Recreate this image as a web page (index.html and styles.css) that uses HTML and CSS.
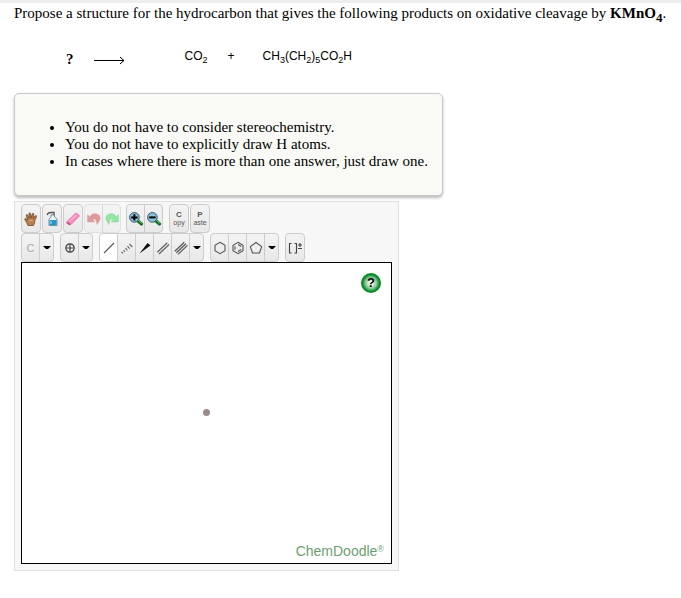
FILE: index.html
```html
<!DOCTYPE html>
<html lang="en">
<head>
    <meta charset="UTF-8">
    <meta name="viewport" content="width=device-width, initial-scale=1.0">
    <title>Oxidative cleavage</title>
    <link rel="stylesheet" href="styles.css">
</head>
<body>
    <main class="problem">
        <p class="question">Propose a structure for the hydrocarbon that gives the following products on oxidative cleavage by <b>KMnO<sub>4</sub></b>.</p>
        <div class="reaction">
            <b class="unknown">?</b>
            <svg class="arrow" width="31" height="9" viewBox="0 0 31 9">
                <path d="M0 4.5H30M26 1L30 4.5L26 8" fill="none" stroke="#000"/>
            </svg>
            <span class="product">CO<sub>2</sub></span>
            <span class="plus">+</span>
            <span class="product">CH<sub>3</sub>(CH<sub>2</sub>)<sub>5</sub>CO<sub>2</sub>H</span>
        </div>
        <div class="notes">
            <ul>
                <li>You do not have to consider stereochemistry.</li>
                <li>You do not have to explicitly draw H atoms.</li>
                <li>In cases where there is more than one answer, just draw one.</li>
            </ul>
        </div>
        <div class="sketcher">
            <div class="toolbar toolbar-edit">
                <button type="button" class="tool" aria-label="Move">
                    <svg width="14" height="16" viewBox="0 0 14 16">
                        <path d="M4 14.5L2.6 11.5L.8 8.4Q.6 7.3 1.7 7.5L3.5 9.2L2.3 4.4Q2.4 3.2 3.5 3.7L5 7.4L5 2.5Q5.7 1.3 6.5 2.4L7.1 7.1L8.4 2.7Q9.4 1.8 9.8 3L9.2 7.6L11.4 4.7Q12.7 4.3 12.5 5.6L10.9 9.5L10.4 12.5L9.4 14.5Z" fill="#b9814f" stroke="#704322" stroke-width=".8"/>
                        <path d="M5 10Q7 8.5 9 10" fill="none" stroke="#dfac7c"/>
                    </svg>
                </button>
                <button type="button" class="tool" aria-label="Clear">
                    <svg width="14" height="16" viewBox="0 0 14 16">
                        <path d="M2 4Q3 1.5 6 1.5H9V4.5H6" fill="none" stroke="#555" stroke-width="1.3"/>
                        <path d="M6 4H9.5V6L12 8V14.5H4V8L6 6Z" fill="#eef6fb" stroke="#56788c" stroke-width=".8"/>
                        <path d="M4.4 9H11.6V14.2H4.4Z" fill="#2b94cb"/>
                        <path d="M6 10V13" stroke="#a8e2f7"/>
                    </svg>
                </button>
                <button type="button" class="tool" aria-label="Erase">
                    <svg width="16" height="16" viewBox="0 0 16 16">
                        <path d="M1.5 11L10.3 2.5Q12.5 1.8 14.5 5L6 13.5Q2.5 14.5 1.5 11Z" fill="#fb91c1" stroke="#d56c9a" stroke-width=".8"/>
                        <path d="M1.5 11Q4 10.5 6 13.5Q2.5 14.5 1.5 11Z" fill="#c14f7b"/>
                        <path d="M4.5 10L11.5 3.8" stroke="#ffc5df"/>
                    </svg>
                </button>
                <span class="group">
                    <button type="button" class="tool" aria-label="Undo" disabled>
                        <svg width="16" height="16" viewBox="0 0 16 16">
                            <path d="M1.5 3.5V11H9L6.8 8.7Q10 6.2 11 13.5Q17.5 5.5 11 3Q6.3 1.5 3.8 5.8Z" fill="#c63d3d" stroke="#c26868" stroke-width=".6"/>
                        </svg>
                    </button>
                    <button type="button" class="tool" aria-label="Redo" disabled>
                        <svg width="16" height="16" viewBox="0 0 16 16">
                            <path d="M14.5 3.5V11H7L9.2 8.7Q6 6.2 5 13.5Q-1.5 5.5 5 3Q9.7 1.5 12.2 5.8Z" fill="#2bd850" stroke="#4cad60" stroke-width=".6"/>
                        </svg>
                    </button>
                </span>
                <span class="group">
                    <button type="button" class="tool" aria-label="Zoom in">
                        <svg width="16" height="16" viewBox="0 0 16 16">
                            <path d="M9.5 9.5L13.5 13" stroke="#176b2b" stroke-width="3.2" stroke-linecap="round"/>
                            <path d="M10 9L13.5 12" stroke="#5fdc55" stroke-linecap="round"/>
                            <circle cx="6.4" cy="6.4" r="4.8" fill="#8bc2df" stroke="#38525f"/>
                            <path d="M6.4 3.2V9.6M3.2 6.4H9.6" stroke="#000" stroke-width="2"/>
                        </svg>
                    </button>
                    <button type="button" class="tool" aria-label="Zoom out">
                        <svg width="16" height="16" viewBox="0 0 16 16">
                            <path d="M9.5 9.5L13.5 13" stroke="#176b2b" stroke-width="3.2" stroke-linecap="round"/>
                            <path d="M10 9L13.5 12" stroke="#5fdc55" stroke-linecap="round"/>
                            <circle cx="6.4" cy="6.4" r="4.8" fill="#8bc2df" stroke="#38525f"/>
                            <path d="M3.2 6.4H9.6" stroke="#000" stroke-width="2"/>
                        </svg>
                    </button>
                </span>
                <button type="button" class="tool tool-text"><b>C</b><small>opy</small></button>
                <button type="button" class="tool tool-text"><b>P</b><small>aste</small></button>
            </div>
            <div class="toolbar">
                <span class="group">
                    <button type="button" class="tool label" disabled>C</button>
                    <button type="button" class="tool drop" aria-label="More labels"><svg width="8" height="4" viewBox="0 0 8 4"><path d="M0 0H8L5 3H3Z"/></svg></button>
                </span>
                <span class="group">
                    <button type="button" class="tool" aria-label="Increase charge">
                        <svg width="16" height="16" viewBox="0 0 16 16">
                            <path d="M8 4V12M4 8H12M12.2 8A4.2 4.2 0 1 1 3.8 8A4.2 4.2 0 1 1 12.2 8" fill="none" stroke="#444" stroke-width="1.2"/>
                        </svg>
                    </button>
                    <button type="button" class="tool drop" aria-label="More attributes"><svg width="8" height="4" viewBox="0 0 8 4"><path d="M0 0H8L5 3H3Z"/></svg></button>
                </span>
                <span class="group">
                    <button type="button" class="tool active" aria-label="Single bond">
                        <svg width="16" height="16" viewBox="0 0 16 16"><path d="M3 13L13 3" stroke="#555" stroke-width="1.1"/></svg>
                    </button>
                    <button type="button" class="tool" aria-label="Recessed bond">
                        <svg width="16" height="16" viewBox="0 0 16 16"><path d="M2.5 12L4 13.2M4.5 10.2L6 12M6.5 8.2L8.3 10.4M8.5 6.2L10.7 8.6M10.5 4L13.3 7" stroke="#666" stroke-width="1.1"/></svg>
                    </button>
                    <button type="button" class="tool" aria-label="Protruding bond">
                        <svg width="16" height="16" viewBox="0 0 16 16"><path d="M2.5 13.5L10.5 3L13.5 5.5Z" fill="#111"/></svg>
                    </button>
                    <button type="button" class="tool" aria-label="Double bond">
                        <svg width="16" height="16" viewBox="0 0 16 16"><path d="M2.3 12.3L12.3 2.8M4 14L14 4.5" stroke="#666" stroke-width="1.3"/></svg>
                    </button>
                    <button type="button" class="tool" aria-label="Triple bond">
                        <svg width="16" height="16" viewBox="0 0 16 16"><path d="M1.8 11.2L11.3 2.2M3.4 12.8L12.9 3.8M5 14.4L14.5 5.4" stroke="#555" stroke-width="1.2"/></svg>
                    </button>
                    <button type="button" class="tool drop" aria-label="More bonds"><svg width="8" height="4" viewBox="0 0 8 4"><path d="M0 0H8L5 3H3Z"/></svg></button>
                </span>
                <span class="group">
                    <button type="button" class="tool" aria-label="Cyclohexane ring">
                        <svg width="16" height="16" viewBox="0 0 16 16"><path d="M8 2.3L13 5.2V10.8L8 13.7L3 10.8V5.2Z" fill="none" stroke="#555" stroke-width="1.1"/></svg>
                    </button>
                    <button type="button" class="tool" aria-label="Benzene ring">
                        <svg width="16" height="16" viewBox="0 0 16 16"><path d="M8 2.3L13 5.2V10.8L8 13.7L3 10.8V5.2ZM5 6.2V9.8M8 4.5L11.3 6.4M8 11.5L11.3 9.6" fill="none" stroke="#555" stroke-width="1.1"/></svg>
                    </button>
                    <button type="button" class="tool" aria-label="Cyclopentane ring">
                        <svg width="16" height="16" viewBox="0 0 16 16"><path d="M8 2.5L13.7 6.6L11.5 13H4.5L2.3 6.6Z" fill="none" stroke="#555" stroke-width="1.1"/></svg>
                    </button>
                    <button type="button" class="tool drop" aria-label="More rings"><svg width="8" height="4" viewBox="0 0 8 4"><path d="M0 0H8L5 3H3Z"/></svg></button>
                </span>
                <button type="button" class="tool" aria-label="Brackets and charge">
                    <svg width="16" height="16" viewBox="0 0 16 16"><path d="M4.5 3.5H2.5V13H4.5M7.5 3.5H9.5V13H7.5M11 5H15M13 3V7M11 8.5H15" fill="none" stroke="#444" stroke-width="1.1"/></svg>
                </button>
            </div>
            <div class="canvas">
                <svg width="369" height="300" viewBox="0 0 369 300">
                    <circle cx="184.5" cy="149.5" r="3.5" fill="#9b8c8c"/>
                    <text class="brand" x="362" y="293" text-anchor="end">ChemDoodle<tspan class="mark" dy="-4">®</tspan></text>
                </svg>
                <button type="button" class="help">?</button>
            </div>
        </div>
    </main>
</body>
</html>
```
FILE: styles.css
```css
body {
    margin: 0;
    border-top: 3px solid #eee;
    background-color: #fff;
    color: #000;
    font: 15px/17px "Liberation Serif", "Times New Roman", serif;
}
.problem {
    padding: 2px 14px 24px;
}
.question {
    margin: 0;
    min-height: 19px;
}
sub {
    line-height: 0;
}
.question sub {
    font-size: 13px;
}
.reaction {
    display: flex;
    align-items: center;
    height: 32px;
    margin: 16px 0 21px;
    padding-left: 52px;
    font: 12px/16px "Liberation Sans", Arial, sans-serif;
}
.unknown {
    padding-top: 6px;
    font: bold 15px/16px "Liberation Serif", "Times New Roman", serif;
}
.arrow {
    margin: 8px 60px 0 20px;
}
.plus {
    margin: 0 28px 0 20px;
}
.reaction sub {
    font-size: 9px;
}
.notes {
    width: fit-content;
    padding: 25px 14px 25px 10px;
    border: 1px solid #c8c8c8;
    border-radius: 5px;
    background-color: #f9faf5;
    box-shadow: 0 2px 3px #bbb;
}
.notes ul {
    margin: 0;
    padding-left: 40px;
}
.sketcher {
    width: fit-content;
    margin-top: 5px;
    padding: 2px 6px 6px;
    border: 1px solid #e0e0e0;
    background-color: #f7f7f7;
}
.toolbar {
    display: flex;
    gap: 6px;
}
.toolbar-edit {
    gap: 1px;
}
.group {
    display: flex;
}
.toolbar-edit .group + .group {
    margin: 0 5px 0 4px;
}
.tool {
    display: flex;
    align-items: center;
    justify-content: center;
    width: 20px;
    height: 29px;
    padding: 0;
    border: 1px solid #ccc;
    border-radius: 4px;
    background: linear-gradient(#f3f3f3, #e8e8e8);
    color: #555;
    font: 11px "Liberation Sans", Arial, sans-serif;
}
.tool svg {
    flex: none;
}
.group .tool {
    width: 19px;
    border-radius: 0;
}
.group .tool + .tool {
    margin-left: -1px;
}
.group .tool:first-child {
    border-radius: 4px 0 0 4px;
}
.group .tool:last-child {
    border-radius: 0 4px 4px 0;
}
.group .drop {
    width: 15px;
}
.group .active {
    background: #fff;
}
.toolbar-edit .tool:disabled {
    opacity: 0.5;
}
.label:disabled {
    color: #aaa;
}
.tool-text {
    flex-direction: column;
    font-size: 8px;
    line-height: 9px;
}
.tool-text small {
    font-size: 7px;
    line-height: 8px;
}
.canvas {
    position: relative;
    border: 1px solid #000;
    background-color: #fff;
}
.canvas svg {
    display: block;
}
.brand {
    fill: #6c9f70;
    font: 14px "Liberation Sans", Arial, sans-serif;
}
.mark {
    font-size: 9px;
}
.help {
    position: absolute;
    top: 10px;
    right: 10px;
    width: 20px;
    height: 20px;
    padding: 0;
    border: 0;
    border-radius: 50%;
    background: radial-gradient(circle, #f4fbf5 10%, #8fc99b 38%, #078a25 60%);
    color: #000;
    font: bold 13px/20px "Liberation Sans", Arial, sans-serif;
}
```
